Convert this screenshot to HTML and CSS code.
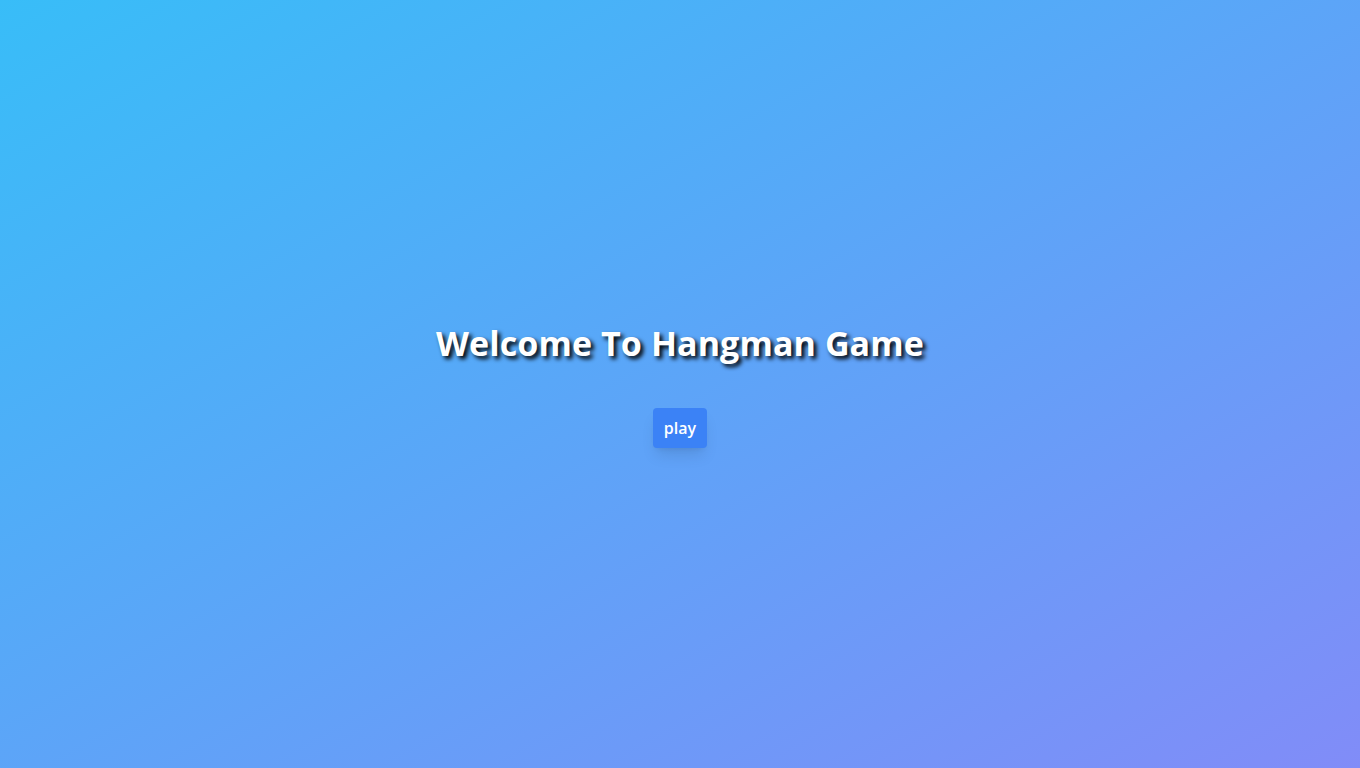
FILE: index.html
```html
<!DOCTYPE html>
<html lang="en">
<head>
<meta charset="utf-8">
<title>Hangman Game</title>
<link rel="stylesheet" href="styles.css">
</head>
<body>
<main class="welcome">
  <h1 class="welcome-title">Welcome To Hangman Game</h1>
  <button class="play-btn" type="button">play</button>
</main>
</body>
</html>
```
FILE: styles.css
```css
html, body {
  margin: 0;
  padding: 0;
  height: 100%;
}
body {
  font-family: "Open Sans", "Noto Sans", sans-serif;
  background: linear-gradient(to bottom right, #38bdf8, #818cf8);
  min-height: 100vh;
}
.welcome {
  min-height: 100vh;
  display: flex;
  flex-direction: column;
  align-items: center;
  justify-content: center;
  gap: 45px;
  padding-top: 2px;
  box-sizing: border-box;
}
.welcome-title {
  margin: 0;
  font-size: 34px;
  line-height: 40px;
  font-weight: 700;
  color: #fff;
  text-shadow: 3px 3px 4px #000;
  letter-spacing: 0.1px;
}
.play-btn {
  font-family: "Open Sans", "Noto Sans", sans-serif;
  font-size: 16px;
  font-weight: 600;
  line-height: 24px;
  color: #fff;
  background: #3b82f6;
  border: none;
  border-radius: 4px;
  padding: 8px 11px;
  box-shadow: 0 10px 15px -3px rgba(0,0,0,0.1), 0 4px 6px -4px rgba(0,0,0,0.1);
  cursor: pointer;
}
```
